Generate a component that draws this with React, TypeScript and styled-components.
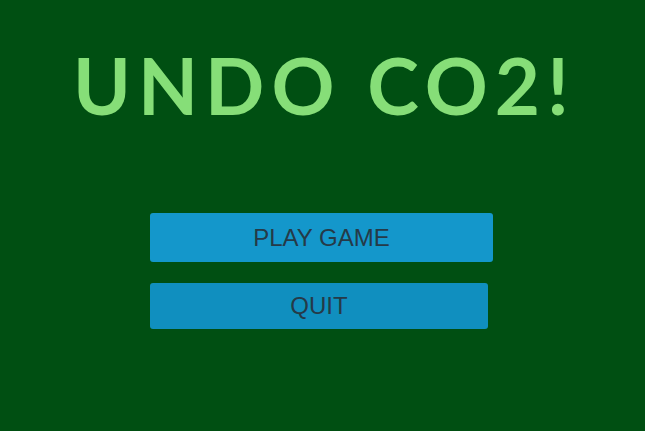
import React from "react";
import styled, { createGlobalStyle } from "styled-components";

const GlobalStyle = createGlobalStyle`
  html, body {
    margin: 0;
    padding: 0;
    background: #004f12;
  }
`;

const Screen = styled.div`
  width: 645px;
  height: 431px;
  background: #004f12;
  display: flex;
  flex-direction: column;
  overflow: hidden;
`;

const Title = styled.h1`
  margin: 0;
  padding-top: 41px;
  padding-left: 4px;
  text-align: center;
  font-family: Lato, "Liberation Sans", sans-serif;
  font-weight: 700;
  font-size: 78px;
  line-height: 88px;
  letter-spacing: 7px;
  color: #86de78;
`;

const Menu = styled.div`
  display: flex;
  flex-direction: column;
  gap: 21px;
  padding: 84px 0 0 150px;
`;

const MenuButton = styled.button<{ $w: number; $h: number; $tone: string }>`
  width: ${(p) => p.$w}px;
  height: ${(p) => p.$h}px;
  border: none;
  border-radius: 3px;
  background: ${(p) => p.$tone};
  color: #253a48;
  font-family: "Liberation Sans", Arial, sans-serif;
  font-size: 24px;
  padding: 0;
  cursor: pointer;
`;

const App = () => {
  return (
    <Screen>
      <GlobalStyle />
      <Title>UNDO CO2!</Title>
      <Menu>
        <MenuButton $w={343} $h={49} $tone="#1497cb">
          PLAY GAME
        </MenuButton>
        <MenuButton $w={338} $h={46} $tone="#108fbf">
          QUIT
        </MenuButton>
      </Menu>
    </Screen>
  );
};

export default App;
